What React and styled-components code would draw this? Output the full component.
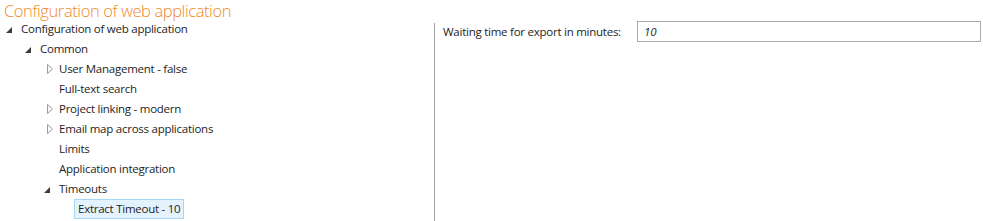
import React from "react";
import styled, { createGlobalStyle } from "styled-components";

const GlobalStyle = createGlobalStyle`
  html, body {
    margin: 0;
    padding: 0;
    background: #fff;
  }
  body {
    width: 983px;
    height: 221px;
    overflow: hidden;
    font-family: "Open Sans", "Noto Sans", sans-serif;
  }
`;

const tree = [
  { label: "Configuration of web application", level: 0, state: "open" },
  { label: "Common", level: 1, state: "open" },
  { label: "User Management - false", level: 2, state: "closed" },
  { label: "Full-text search", level: 2 },
  { label: "Project linking - modern", level: 2, state: "closed" },
  { label: "Email map across applications", level: 2, state: "closed" },
  { label: "Limits", level: 2 },
  { label: "Application integration", level: 2 },
  { label: "Timeouts", level: 2, state: "open" },
  { label: "Extract Timeout - 10", level: 3, selected: true },
];

function Expander({ state }) {
  if (state === "open") {
    return (
      <ExpanderBox>
        <svg width="6" height="6" viewBox="0 0 6 6" style={{ marginTop: 2 }}>
          <polygon points="0,6 6,6 6,0" fill="#3c3c3c" />
        </svg>
      </ExpanderBox>
    );
  }
  if (state === "closed") {
    return (
      <ExpanderBox>
        <svg width="6" height="10" viewBox="0 0 6 10" style={{ marginLeft: 3 }}>
          <polygon points="0.5,0.5 5.5,5 0.5,9.5" fill="none" stroke="#9a9a9a" strokeWidth="1" />
        </svg>
      </ExpanderBox>
    );
  }
  return <ExpanderBox />;
}

function App() {
  return (
    <>
      <GlobalStyle />
      <Page>
        <Title>Configuration of web application</Title>
        <Main>
          <Tree>
            {tree.map((node, i) => (
              <Row key={i} level={node.level}>
                <Expander state={node.state} />
                <Label selected={node.selected}>{node.label}</Label>
              </Row>
            ))}
          </Tree>
          <Divider />
          <Form>
            <FieldRow>
              <FieldLabel>Waiting time for export in minutes:</FieldLabel>
              <Input defaultValue="10" />
            </FieldRow>
          </Form>
        </Main>
      </Page>
    </>
  );
}
export default App;

const Page = styled.div`
  display: flex;
  flex-direction: column;
  height: 221px;
`;

const Title = styled.div`
  font-family: "Open Sans", sans-serif;
  font-weight: 300;
  font-size: 16.5px;
  letter-spacing: -0.4px;
  line-height: 22px;
  height: 22px;
  margin-bottom: -3px;
  color: #f0892a;
  padding-left: 4px;
  white-space: nowrap;
`;

const Main = styled.div`
  display: flex;
  flex: 1;
  min-height: 0;
`;

const Tree = styled.div`
  width: 434px;
  display: flex;
  flex-direction: column;
`;

const Row = styled.div`
  display: flex;
  align-items: center;
  height: 20px;
  padding-left: ${(p) => 2 + p.level * 19}px;
`;

const ExpanderBox = styled.div`
  width: 15px;
  height: 20px;
  display: flex;
  align-items: center;
  justify-content: flex-start;
  padding-left: 4px;
  box-sizing: border-box;
`;

const Label = styled.div`
  font-size: 11.5px;
  letter-spacing: -0.25px;
  line-height: 18px;
  color: #1e1e1e;
  padding: 0 3px;
  border: 1px solid ${(p) => (p.selected ? "#a6d6f5" : "transparent")};
  background: ${(p) => (p.selected ? "#e3f2fc" : "transparent")};
  white-space: nowrap;
`;

const Divider = styled.div`
  width: 1px;
  margin-top: 4px;
  background: #a0a0a0;
`;

const Form = styled.div`
  flex: 1;
  padding: 2px 2px 0 8px;
`;

const FieldRow = styled.div`
  display: flex;
  align-items: center;
  height: 21px;
`;

const FieldLabel = styled.div`
  width: 194px;
  font-size: 11.5px;
  letter-spacing: -0.25px;
  color: #1e1e1e;
  white-space: nowrap;
`;

const Input = styled.input`
  box-sizing: border-box;
  width: 344px;
  height: 21px;
  border: 1px solid #ababab;
  padding: 0 6px;
  font-family: "Open Sans", sans-serif;
  font-size: 11.5px;
  font-style: italic;
  color: #1e1e1e;
  outline: none;
`;
